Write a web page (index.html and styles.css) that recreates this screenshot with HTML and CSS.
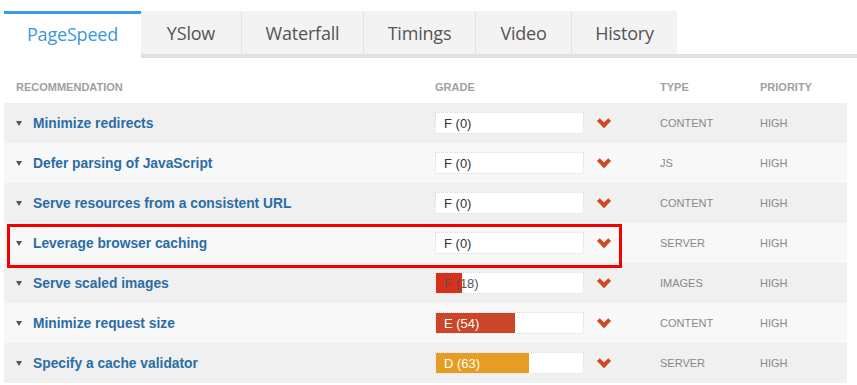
FILE: index.html
```html
<!DOCTYPE html>
<html lang="en">
<head>
    <meta charset="UTF-8">
    <meta name="viewport" content="width=device-width, initial-scale=1.0">
    <title>PageSpeed report</title>
    <link rel="stylesheet" href="styles.css">
</head>
<body>
    <nav class="tabs">
        <a class="tab active" href="#">PageSpeed</a>
        <a class="tab" href="#">YSlow</a>
        <a class="tab" href="#">Waterfall</a>
        <a class="tab" href="#">Timings</a>
        <a class="tab" href="#">Video</a>
        <a class="tab" href="#">History</a>
    </nav>

    <section class="report">
        <div class="row head">
            <div>Recommendation</div>
            <div>Grade</div>
            <div>Type</div>
            <div>Priority</div>
        </div>

        <div class="row dark">
            <div class="name"><span class="caret"></span>Minimize redirects</div>
            <div class="grade"><div class="box"><span>F (0)</span></div><span class="chev"></span></div>
            <div class="type">Content</div>
            <div class="type">High</div>
        </div>
        <div class="row light">
            <div class="name"><span class="caret"></span>Defer parsing of JavaScript</div>
            <div class="grade"><div class="box"><span>F (0)</span></div><span class="chev"></span></div>
            <div class="type">JS</div>
            <div class="type">High</div>
        </div>
        <div class="row dark">
            <div class="name"><span class="caret"></span>Serve resources from a consistent URL</div>
            <div class="grade"><div class="box"><span>F (0)</span></div><span class="chev"></span></div>
            <div class="type">Content</div>
            <div class="type">High</div>
        </div>
        <div class="row light marked">
            <div class="name"><span class="caret"></span>Leverage browser caching</div>
            <div class="grade"><div class="box"><span>F (0)</span></div><span class="chev"></span></div>
            <div class="type">Server</div>
            <div class="type">High</div>
        </div>
        <div class="row dark">
            <div class="name"><span class="caret"></span>Serve scaled images</div>
            <div class="grade"><div class="box"><div class="bar red" style="width: 18%"></div><span>F (18)</span></div><span class="chev"></span></div>
            <div class="type">Images</div>
            <div class="type">High</div>
        </div>
        <div class="row light">
            <div class="name"><span class="caret"></span>Minimize request size</div>
            <div class="grade"><div class="box"><div class="bar rust" style="width: 54%"></div><span class="on-bar">E (54)</span></div><span class="chev"></span></div>
            <div class="type">Content</div>
            <div class="type">High</div>
        </div>
        <div class="row dark">
            <div class="name"><span class="caret"></span>Specify a cache validator</div>
            <div class="grade"><div class="box"><div class="bar amber" style="width: 63%"></div><span class="on-bar">D (63)</span></div><span class="chev"></span></div>
            <div class="type">Server</div>
            <div class="type">High</div>
        </div>
    </section>
</body>
</html>
```

FILE: styles.css
```css
body {
    margin: 0;
    background: #fff;
    font-family: "Liberation Sans", Arial, sans-serif;
}

/* onglets */
.tabs {
    display: flex;
    margin-top: 11px;
    padding-left: 4px;
}

.tabs::after {
    content: "";
    flex: 1;
    border-bottom: 4px solid #e0e0e0;
}

.tab {
    display: flex;
    align-items: center;
    justify-content: center;
    height: 47px;
    box-sizing: border-box;
    background: #f3f3f3;
    border-left: 1px solid #e2e2e2;
    border-bottom: 4px solid #e0e0e0;
    color: #555;
    font-family: "Open Sans", sans-serif;
    font-size: 18px;
    letter-spacing: -0.2px;
    text-decoration: none;
}

.tab.active {
    width: 137px;
    background: #fff;
    color: #3a97dd;
    border-left: none;
    border-top: 3px solid #3b9ae1;
    border-bottom-color: #fff;
}

.tab:nth-child(2) { width: 100px; border-left: none; }
.tab:nth-child(3) { width: 122px; }
.tab:nth-child(4) { width: 112px; }
.tab:nth-child(5) { width: 96px; }
.tab:nth-child(6) { width: 106px; }

/* tableau */
.report {
    margin: 0 10px 0 4px;
}

.row {
    position: relative;
    display: grid;
    grid-template-columns: 431px 225px 100px 87px;
    align-items: center;
    height: 40px;
}

.row > div:first-child {
    padding-left: 12px;
}

.row.head {
    height: 45px;
    align-items: end;
    padding-bottom: 10px;
    box-sizing: border-box;
    color: #a0a0a0;
    font-size: 11px;
    font-weight: bold;
    line-height: 12px;
    text-transform: uppercase;
}

.row.dark { background: #f0f0f0; }
.row.light { background: #f8f8f8; }

.name {
    display: flex;
    align-items: center;
    color: #2a6da6;
    font-size: 13.8px;
    font-weight: bold;
}

.caret {
    width: 0;
    height: 0;
    margin-right: 11px;
    border-left: 3.5px solid transparent;
    border-right: 3.5px solid transparent;
    border-top: 5px solid #555;
}

.grade {
    display: flex;
    align-items: center;
    gap: 12px;
}

.box {
    position: relative;
    width: 149px;
    height: 22px;
    box-sizing: border-box;
    background: #fff;
    border: 1px dotted #d8d8d8;
    display: flex;
    align-items: center;
}

.box span {
    position: relative;
    padding-left: 8px;
    color: #333;
    font-size: 13px;
}

.box span.on-bar {
    color: #fff;
}

.bar {
    position: absolute;
    top: 0;
    left: 0;
    bottom: 0;
}

.bar.red { background: #d9301b; }
.bar.rust { background: #cc4526; }
.bar.amber { background: #e59e23; }

.box .bar.red + span { color: #555; }

.chev {
    position: relative;
    width: 15px;
    height: 10px;
}

.chev::before {
    content: "";
    position: absolute;
    left: 2.5px;
    top: -2px;
    width: 6px;
    height: 6px;
    border-right: 4px solid #d4471f;
    border-bottom: 4px solid #d4471f;
    transform: rotate(45deg);
}

.type {
    color: #888;
    font-size: 11px;
    text-transform: uppercase;
}

.row.marked {
    z-index: 1;
}

.row.marked::after {
    content: "";
    position: absolute;
    left: 3px;
    top: 1px;
    width: 615px;
    height: 44px;
    box-sizing: border-box;
    border: 3px solid #f40000;
}
```
